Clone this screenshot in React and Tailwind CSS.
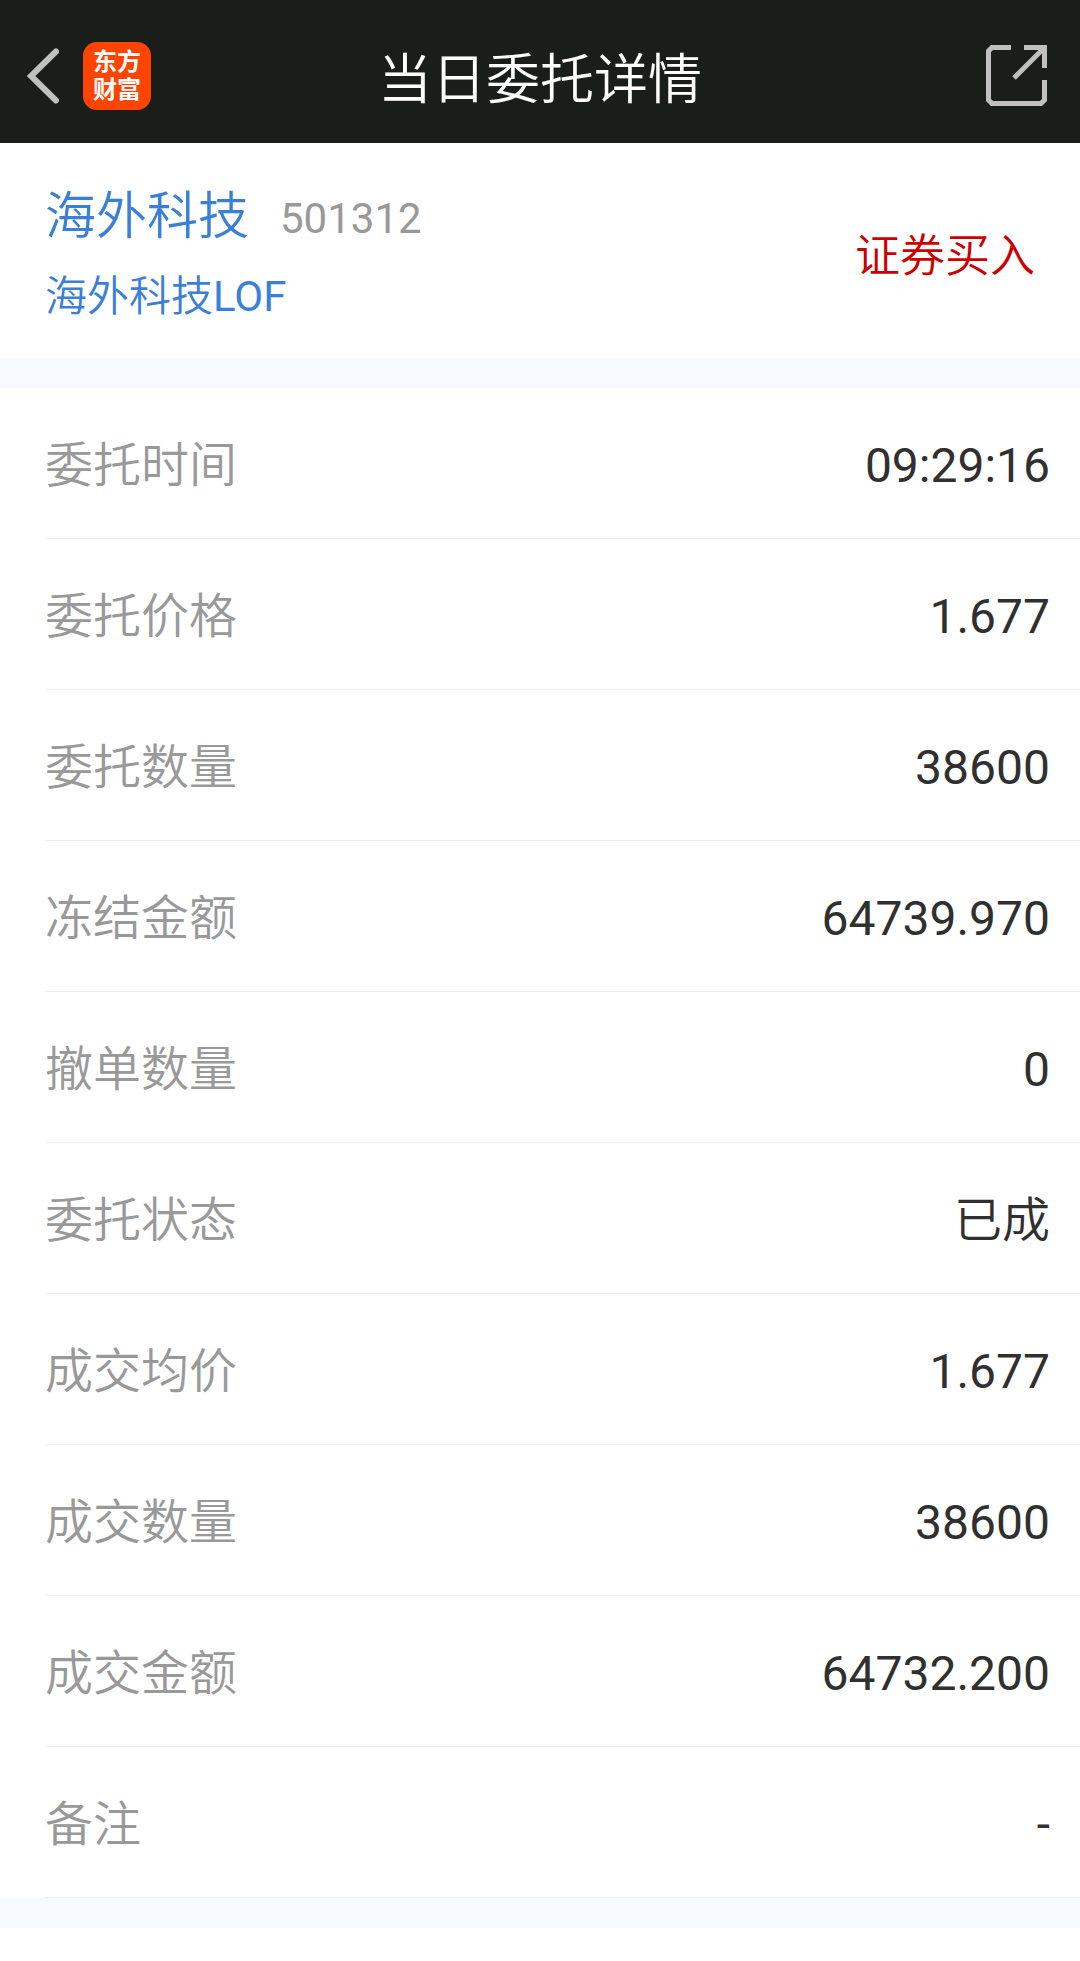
const rows = [
  { label: '委托时间', value: '09:29:16' },
  { label: '委托价格', value: '1.677' },
  { label: '委托数量', value: '38600' },
  { label: '冻结金额', value: '64739.970' },
  { label: '撤单数量', value: '0' },
  { label: '委托状态', value: '已成', weight: 'font-[350]' },
  { label: '成交均价', value: '1.677' },
  { label: '成交数量', value: '38600' },
  { label: '成交金额', value: '64732.200' },
  { label: '备注', value: '-' },
];

export default function App() {
  return (
    <div className="min-h-screen bg-white font-['Roboto','Noto_Sans_CJK_SC',sans-serif]">
      <header className="grid h-[143px] grid-cols-[1fr_auto_1fr] items-center bg-[#1a1e1b] pt-2">
        <div className="flex items-center gap-6 pl-[27px]">
          <button type="button" aria-label="返回">
            <svg className="h-14 w-8" viewBox="0 0 32 56" fill="none" stroke="#c0c0c0" strokeWidth="6" strokeLinecap="round">
              <path d="M29 3.5 L4 28 L29 52.5" strokeLinejoin="miter" />
            </svg>
          </button>
          <div className="flex h-[68px] w-[68px] flex-col items-center justify-center rounded-[14px] bg-[#ff4400] text-2xl leading-7 font-bold text-white">
            <span>东方</span>
            <span>财富</span>
          </div>
        </div>
        <h1 className="pt-2.5 text-[54px] leading-[72px] font-[350] text-white">当日委托详情</h1>
        <div className="flex justify-end pr-[33px]">
          <button type="button" aria-label="分享">
            <svg className="h-[61px] w-[61px]" viewBox="0 0 61 61" fill="none" stroke="#c0c0c0" strokeWidth="5">
              <path d="M25 2.5 H6 L2.5 6 V55 L6 58.5 H55 L58.5 55 V35" />
              <path d="M38 2.5 H58.5 V23 M28 33 L58 3" />
            </svg>
          </button>
        </div>
      </header>
      <main>
        <section className="flex h-[215px] items-center justify-between bg-white pt-3 pr-[45px] pl-[45px]">
          <div>
            <div className="flex items-center gap-[31px]">
              <h2 className="text-[51px] leading-[80px] font-[350] text-[#3a7fd8]">海外科技</h2>
              <span className="pt-1 text-[42px] text-[#999999]">501312</span>
            </div>
            <p className="text-[42px] leading-[80px] font-[350] text-[#3a7fd8]">
              海外科技<span className="font-normal">LOF</span>
            </p>
          </div>
          <strong className="text-[45px] leading-[80px] font-[350] text-[#cc0000]">证券买入</strong>
        </section>
        <div className="h-[30px] bg-[#f6faff]" />
        <dl>
          {rows.map(({ label, value, weight = 'font-normal' }) => (
            <div key={label} className="pl-[45px]">
              <div className="flex h-[151px] items-center justify-between border-b border-[#eeeeee] pt-1.5 pr-[30px] text-5xl">
                <dt className="font-[350] text-[#999999]">{label}</dt>
                <dd className={`text-[#303030] ${weight}`}>{value}</dd>
              </div>
            </div>
          ))}
        </dl>
        <div className="h-[30px] bg-[#f6faff]" />
      </main>
    </div>
  );
}
